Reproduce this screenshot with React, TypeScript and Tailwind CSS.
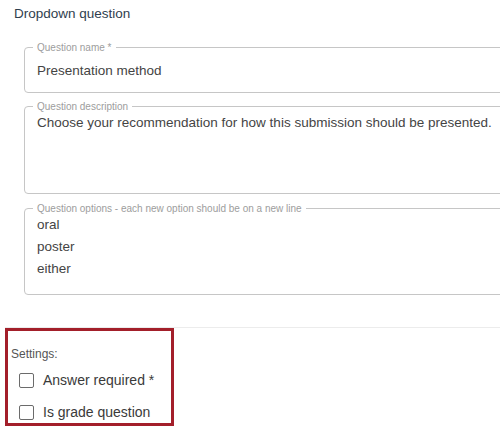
import { useState } from "react";

function Field(props: { label: string; children: React.ReactNode; className: string }) {
    return (
        <fieldset className={"ml-[24px] w-[520px] border border-[#c6c6c6] rounded-[4px] pl-[12px] pr-0 pb-0 m-0 " + props.className}>
            <legend className="ml-[-4px] px-[4px] text-[10px] leading-[11px] text-[#9d9d9d]">
                {props.label}
            </legend>
            {props.children}
        </fieldset>
    );
}

function Check(props: { label: string }) {
    const [on, setOn] = useState(false);
    return (
        <label className="flex flex-row items-center h-[32px] pl-[11px] cursor-pointer">
            <span
                onClick={() => setOn(!on)}
                className="w-[15px] h-[15px] border-[1.5px] border-[#6b6b6b] rounded-[2px] flex items-center justify-center text-[11px] text-[#333]"
            >
                {on ? "✓" : ""}
            </span>
            <span className="ml-[9px] text-[14px] text-[#3a3a3a]">{props.label}</span>
        </label>
    );
}

export default function App() {
    return (
        <div className="w-[500px] h-[426px] overflow-hidden bg-white font-['Liberation_Sans',Arial,sans-serif]">
            <div className="h-[41.5px] pt-[6px] pl-[14px] text-[13.5px] leading-[16px] text-[#2f3e4e]">
                Dropdown question
            </div>
            <Field label="Question name *" className="">
                <div className="h-[39px] pt-[8px] text-[13.5px] leading-[20px] text-[#444]">
                    Presentation method
                </div>
            </Field>
            <Field label="Question description" className="mt-[8px]">
                <div className="h-[81px] pt-[1.5px] text-[13.5px] leading-[20px] text-[#444]">
                    Choose your recommendation for how this submission should be presented.
                </div>
            </Field>
            <Field label="Question options - each new option should be on a new line" className="mt-[9px]">
                <div className="h-[80px] pt-[0.5px] text-[13.5px] leading-[22px] text-[#444]">
                    <div>oral</div>
                    <div>poster</div>
                    <div>either</div>
                </div>
            </Field>
            <div className="mt-[32px] ml-[5px] border-t border-[#ececec]"></div>
            <div className="ml-[5px] w-[169px] h-[98px] border-[3px] border-[#a31f2a]">
                <div className="pt-[16px] pl-[3px] text-[12px] leading-[14px] text-[#555]">
                    Settings:
                </div>
                <div className="mt-[4px]">
                    <Check label="Answer required *" />
                    <Check label="Is grade question" />
                </div>
            </div>
        </div>
    );
}
